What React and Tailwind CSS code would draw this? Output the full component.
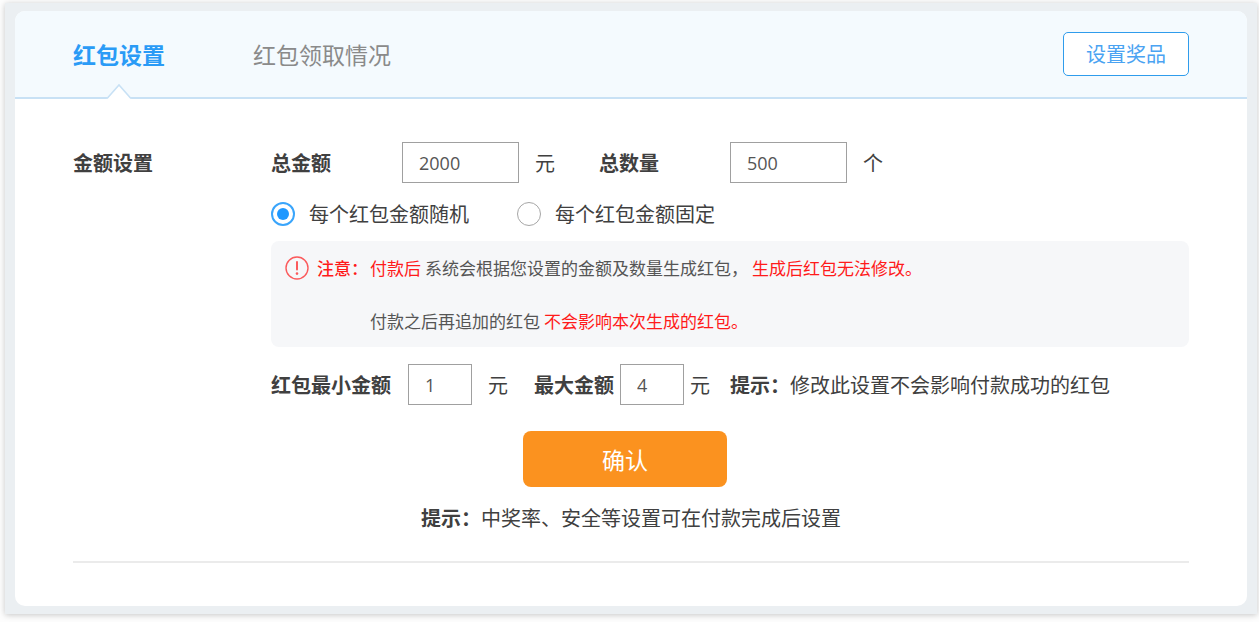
import { useState } from 'react';

const TABS = [
    { id: 'settings', label: '红包设置' },
    { id: 'records', label: '红包领取情况' },
];

const MODES = [
    { value: 'random', label: '每个红包金额随机' },
    { value: 'fixed', label: '每个红包金额固定' },
];

function NumberField({ id, value, onChange, className }) {
    return (
        <input
            id={id}
            name={id}
            type="text"
            inputMode="numeric"
            value={value}
            onChange={onChange}
            className={`h-[41px] border border-[#a0a0a0] bg-white px-4 font-['Open_Sans','Noto_Sans_CJK_SC',sans-serif] text-lg text-[#555] outline-none focus:border-[#1e9bff] ${className}`}
        />
    );
}

function WarningIcon() {
    return (
        <svg className="mr-2 h-6 w-6 shrink-0" viewBox="0 0 24 24" fill="none" aria-hidden="true">
            <circle cx="12" cy="12" r="11" stroke="#fb5a5c" strokeWidth="1.4" />
            <path d="M12 6V13.5" stroke="#fb5a5c" strokeWidth="2" strokeLinecap="round" />
            <circle cx="12" cy="17.6" r="1.3" fill="#fb5a5c" />
        </svg>
    );
}

export default function App() {
    const [tab, setTab] = useState('settings');
    const [mode, setMode] = useState('random');
    const [formData, setFormData] = useState({
        total_amount: '2000',
        total_count: '500',
        min_amount: '1',
        max_amount: '4',
    });

    const handleChange = (e) => {
        const { name, value } = e.target;
        setFormData(prev => ({
            ...prev,
            [name]: value
        }));
    };

    return (
        <div className="bg-[#fdfdfd] pt-[3px] pr-[2px] pb-2 pl-[5px] font-['Noto_Sans_CJK_SC',sans-serif] text-[#404040]">
            <div className="bg-[#ebeff2] px-[10px] py-2 shadow-[0_1px_6px_rgba(0,0,0,0.22)]">
                <div className="overflow-hidden rounded-[10px] bg-white">
                    {/* Header */}
                    <header className="flex h-[88px] items-center justify-between border-b-2 border-[#c8e1f5] bg-[#f4fafe] px-[58px]">
                        <nav className="flex gap-[88px] self-stretch">
                            {TABS.map(item => (
                                <button
                                    key={item.id}
                                    type="button"
                                    onClick={() => setTab(item.id)}
                                    className={`relative h-full text-[23px] ${tab === item.id ? 'font-bold text-[#2a9bf6]' : 'text-[#8a8a8a]'}`}
                                >
                                    {item.label}
                                    {tab === item.id && (
                                        <svg className="absolute -bottom-[2px] left-1/2 h-4 w-7 -translate-x-1/2" viewBox="0 0 28 16" aria-hidden="true">
                                            <path d="M1 16 L3 15 L14 2 L25 15 L27 16 Z" fill="#fff" />
                                            <path d="M0 15 H2.5 L14 2 L25.5 15 H28" fill="none" stroke="#c8e1f5" strokeWidth="1.6" />
                                        </svg>
                                    )}
                                </button>
                            ))}
                        </nav>
                        <button type="button" className="h-11 rounded-[5px] border border-[#2f9cec] bg-white px-[22px] text-xl text-[#4aa3f2]">
                            设置奖品
                        </button>
                    </header>

                    <form className="px-[58px] pt-[43px] pb-[43px]" onSubmit={(e) => e.preventDefault()}>
                        <div className="flex">
                            <h2 className="w-[198px] shrink-0 text-xl leading-[41px] font-bold">金额设置</h2>

                            <div className="min-w-0 flex-1 text-xl">
                                {/* Totals */}
                                <div className="flex items-center">
                                    <label htmlFor="total_amount" className="w-[131px] font-bold">总金额</label>
                                    <NumberField id="total_amount" value={formData.total_amount} onChange={handleChange} className="w-[117px]" />
                                    <span className="ml-4 w-16">元</span>
                                    <label htmlFor="total_count" className="w-[131px] font-bold">总数量</label>
                                    <NumberField id="total_count" value={formData.total_count} onChange={handleChange} className="w-[117px]" />
                                    <span className="ml-4">个</span>
                                </div>

                                {/* Amount mode */}
                                <div className="mt-4 mb-3 flex gap-12">
                                    {MODES.map(item => (
                                        <label key={item.value} className="flex items-center gap-[14px] leading-[30px]">
                                            <input
                                                type="radio"
                                                name="mode"
                                                value={item.value}
                                                checked={mode === item.value}
                                                onChange={() => setMode(item.value)}
                                                className="h-6 w-6 appearance-none rounded-full border border-[#a6a6a6] bg-white bg-clip-content p-[5px] checked:border-2 checked:border-[#3aa5fb] checked:bg-[#1e98ff] checked:p-1"
                                            />
                                            {item.label}
                                        </label>
                                    ))}
                                </div>

                                {/* Notice */}
                                <div className="flex rounded-lg bg-[#f6f7f9] pr-4 pl-[14px] text-[17px] leading-[53px] text-[#555]">
                                    <div className="flex h-[53px] items-center">
                                        <WarningIcon />
                                        <strong className="font-medium text-[#ff1a1a]">注意：</strong>
                                    </div>
                                    <div className="ml-[2px]">
                                        <p className="flex gap-1">
                                            <span className="text-[#ff1a1a]">付款后</span>
                                            <span>系统会根据您设置的金额及数量生成红包，</span>
                                            <span className="text-[#ff1a1a]">生成后红包无法修改。</span>
                                        </p>
                                        <p className="flex gap-1">
                                            <span>付款之后再追加的红包</span>
                                            <span className="text-[#ff1a1a]">不会影响本次生成的红包。</span>
                                        </p>
                                    </div>
                                </div>

                                {/* Range */}
                                <div className="mt-[17px] flex items-center">
                                    <label htmlFor="min_amount" className="mr-[17px] font-bold">红包最小金额</label>
                                    <NumberField id="min_amount" value={formData.min_amount} onChange={handleChange} className="w-16" />
                                    <span className="mr-[26px] ml-4">元</span>
                                    <label htmlFor="max_amount" className="mr-[6px] font-bold">最大金额</label>
                                    <NumberField id="max_amount" value={formData.max_amount} onChange={handleChange} className="w-16" />
                                    <span className="mr-5 ml-[6px]">元</span>
                                    <p><strong>提示：</strong>修改此设置不会影响付款成功的红包</p>
                                </div>
                            </div>
                        </div>

                        {/* Submit */}
                        <div className="mt-[26px] flex flex-col items-center border-b-2 border-[#ebebeb] pb-7">
                            <button type="submit" className="mr-3 h-14 w-[204px] rounded-lg bg-[#fb921f] text-[23px] text-white hover:bg-[#f08612]">
                                确认
                            </button>
                            <p className="mt-4 text-xl leading-[30px]"><strong>提示：</strong>中奖率、安全等设置可在付款完成后设置</p>
                        </div>
                    </form>
                </div>
            </div>
        </div>
    );
}
